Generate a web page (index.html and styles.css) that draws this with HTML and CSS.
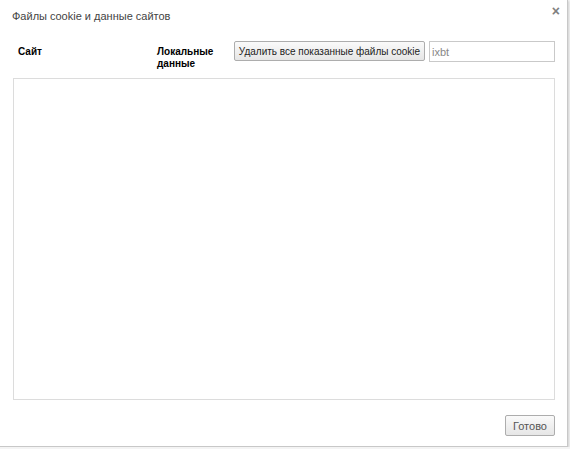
FILE: index.html
```html
<!DOCTYPE html>
<html lang="ru">
<head>
    <meta charset="UTF-8">
    <title>Файлы cookie и данные сайтов</title>
    <link rel="stylesheet" href="styles.css">
</head>
<body>
    <div class="dialog">
        <div class="dialog-head">
            <h1 class="dialog-title">Файлы cookie и данные сайтов</h1>
            <span class="close">&times;</span>
        </div>
        <div class="toolbar">
            <div class="col-site">Сайт</div>
            <div class="col-local">Локальные данные</div>
            <button class="btn btn-remove">Удалить все показанные файлы cookie</button>
            <input class="search" type="text" value="ixbt">
        </div>
        <div class="cookie-list"></div>
        <div class="dialog-foot">
            <button class="btn btn-done">Готово</button>
        </div>
    </div>
</body>
</html>
```

FILE: styles.css
```css
* {
    box-sizing: border-box;
}
body {
    margin: 0;
    background-color: #f4f4f4;
    font-family: "Liberation Sans", Arial, sans-serif;
    font-size: 11px;
    color: #333;
}
.dialog {
    width: 568px;
    height: 447px;
    background: #fff;
    border-right: 1px solid #c8c8c8;
    border-bottom: 1px solid #c8c8c8;
    box-shadow: 1px 1px 2px rgb(0 0 0 / 15%);
    display: flex;
    flex-direction: column;
    padding: 0 12px 0 13px;
}
.dialog-head {
    display: flex;
    justify-content: space-between;
    align-items: flex-start;
    height: 36px;
    padding-top: 10px;
}
.dialog-title {
    margin: 0;
    font-size: 11px;
    font-weight: normal;
    color: #444;
    margin-left: -1px;
}
.close {
    font-size: 14px;
    font-weight: bold;
    line-height: 1;
    color: #808080;
    margin-top: -6px;
    margin-right: -5px;
}
.toolbar {
    display: flex;
    align-items: flex-start;
    height: 42px;
    padding-top: 5px;
}
.col-site {
    width: 144px;
    padding-left: 5px;
    padding-top: 5px;
    font-weight: bold;
    color: #000;
    font-size: 10px;
}
.col-local {
    width: 77px;
    padding-top: 5px;
    font-weight: bold;
    color: #000;
    font-size: 10px;
    line-height: 12px;
}
.btn {
    font-family: inherit;
    font-size: 11px;
    color: #222;
    height: 20px;
    padding: 0 6px;
    border: 1px solid #adadad;
    border-radius: 2px;
    background: linear-gradient(#fafafa, #e6e6e6);
    white-space: nowrap;
}
.btn-remove {
    width: 191px;
    padding: 0;
    font-size: 10px;
}
.search {
    margin-left: 4px;
    width: 126px;
    height: 21px;
    border: 1px solid #c9c9c9;
    padding: 0 2px;
    font-family: inherit;
    font-size: 11px;
    color: #888;
}
.cookie-list {
    height: 322px;
    border: 1px solid #dcdcdc;
}
.dialog-foot {
    display: flex;
    justify-content: flex-end;
    padding-top: 15px;
}
.btn-done {
    width: 50px;
    height: 21px;
    padding: 0;
    color: #555;
}
```
